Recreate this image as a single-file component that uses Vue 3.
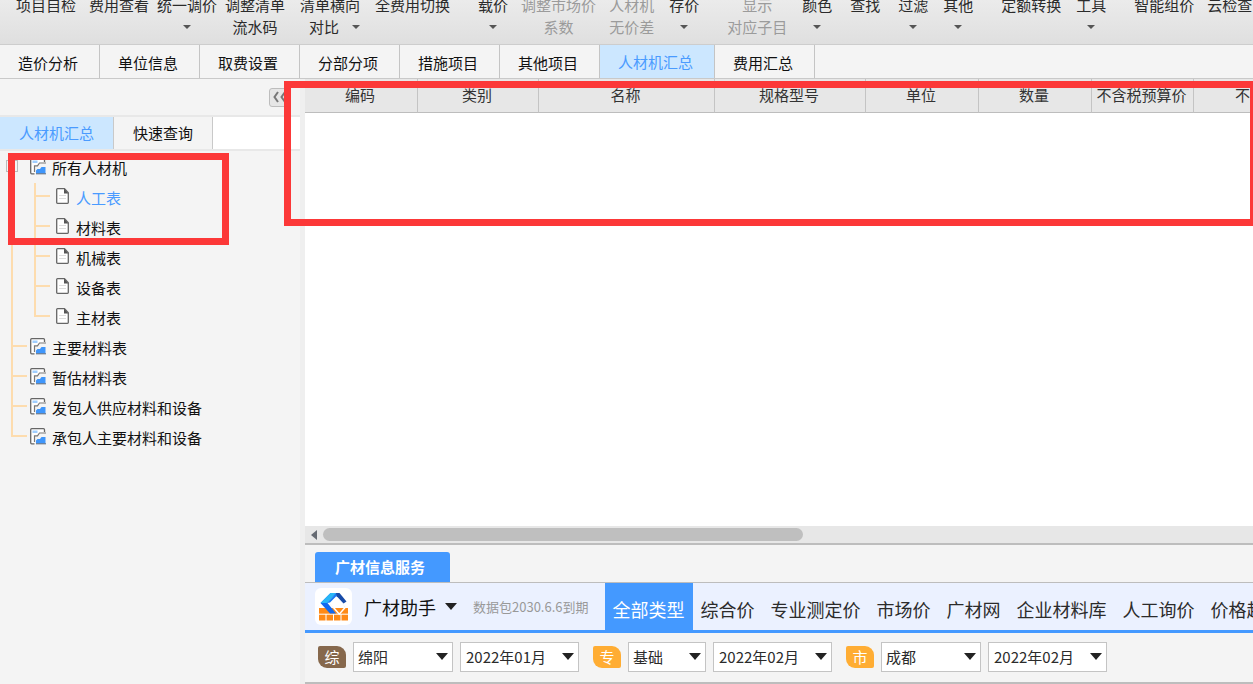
<script setup>
import { ref } from 'vue'

const tools = [
  { top: '项目自检', gap: 'none' },
  { top: '费用查看', gap: 'm' },
  { top: '统一调价', gap: 's', arrow: true },
  { top: '调整清单', bottom: '流水码', gap: 's' },
  { top: '清单横向', bottom: '对比', arrow: true, gap: 'l' },
  { top: '全费用切换', gap: 'l' },
  { top: '载价', gap: 'group', arrow: true },
  { top: '调整市场价', bottom: '系数', gap: 'm', disabled: true },
  { top: '人材机', bottom: '无价差', gap: 'm', disabled: true },
  { top: '存价', gap: 'l', arrow: true },
  { top: '显示', bottom: '对应子目', gap: 'group', disabled: true },
  { top: '颜色', gap: 'l', arrow: true },
  { top: '查找', gap: 'xl' },
  { top: '过滤', gap: 'xl', arrow: true },
  { top: '其他', gap: 'l', arrow: true },
  { top: '定额转换', gap: 'group' },
  { top: '工具', gap: 'l', arrow: true },
  { top: '智能组价', gap: 'group' },
  { top: '云检查', gap: 'm' }
]
const tabs = ['造价分析', '单位信息', '取费设置', '分部分项', '措施项目', '其他项目', '人材机汇总', '费用汇总']
const activeTab = ref('人材机汇总')
const sideTabs = ['人材机汇总', '快速查询']
const activeSide = ref('人材机汇总')
const tree = [
  { name: '所有人材机', children: ['人工表', '材料表', '机械表', '设备表', '主材表'] },
  { name: '主要材料表' },
  { name: '暂估材料表' },
  { name: '发包人供应材料和设备' },
  { name: '承包人主要材料和设备' }
]
const activeNode = ref('人工表')
const columns = ['编码', '类别', '名称', '规格型号', '单位', '数量', '不含税预算价', '不']
const kinds = ['全部类型', '综合价', '专业测定价', '市场价', '广材网', '企业材料库', '人工询价', '价格趋势']
const activeKind = ref('全部类型')
const filters = [
  { mark: '综', name: '综合价', tone: 'brown', area: '绵阳', month: '2022年01月', size: 'wide' },
  { mark: '专', name: '专业测定价', tone: 'orange', area: '基础', month: '2022年02月', size: 'narrow' },
  { mark: '市', name: '市场价', tone: 'orange', area: '成都', month: '2022年02月', size: 'wide' }
]
</script>

<template>
  <div class="app">
    <header class="toolbar">
      <button v-for="t in tools" :key="t.top" class="tool" :class="'gap-' + t.gap" :disabled="t.disabled">
        <span class="tool-line">{{ t.top }}</span>
        <span class="tool-line" :class="{ split: t.bottom && t.arrow }">
          <span v-if="t.bottom">{{ t.bottom }}</span>
          <i v-if="t.arrow" class="caret"></i>
        </span>
      </button>
    </header>

    <nav class="tabs">
      <button v-for="t in tabs" :key="t" class="tab" :class="{ active: t === activeTab }" @click="activeTab = t">{{ t }}</button>
    </nav>

    <div class="body">
      <aside class="side">
        <div class="side-head">
          <button class="collapse" aria-label="收起">
            <svg width="14" height="12" viewBox="0 0 14 12" fill="none" stroke="#777" stroke-width="2">
              <path d="M5 1 1.500 6 5 11M12 1 8.500 6l3.500 5" />
            </svg>
          </button>
        </div>
        <nav class="side-tabs">
          <button v-for="t in sideTabs" :key="t" class="side-tab" :class="{ active: t === activeSide }" @click="activeSide = t">{{ t }}</button>
        </nav>
        <ul class="tree">
          <li v-for="n in tree" :key="n.name" class="node" :class="{ parent: n.children }">
            <i v-if="n.children" class="expander"></i>
            <button class="row" @click="activeNode = n.name">
              <svg class="icon-sheet" width="17" height="17" viewBox="0 0 17 17" fill="none">
                <path d="M1 1h13.500v4L9 6 7.500 8H4.500v7.500H1z" fill="#fff" />
                <path d="M2.500 2.500h5v2.500h-5z" fill="#9fceff" />
                <path d="M6 15.500v-3l1.500-1.500h2.500l1.500-2H15.500v6.500z" fill="#3f96fb" />
                <path d="M14.500 4V1.700Q14.500.7 13.500.7H1.700Q.7.7.7 1.700v13.100q0 1 1 1H4.500" stroke="#666" stroke-width="1.300" />
                <path d="M4.500 14V7.800H7.500L9.500 5H16" stroke="#777" stroke-width="1.200" />
                <path d="M6 15.800h10" stroke="#56657a" stroke-width="1" />
              </svg>
              <span>{{ n.name }}</span>
            </button>
            <ul v-if="n.children" class="leaves">
              <li v-for="c in n.children" :key="c" class="leaf">
                <button class="row" :class="{ active: c === activeNode }" @click="activeNode = c">
                  <svg class="icon-doc" width="13" height="16" viewBox="0 0 13 16" fill="none">
                    <path d="M1.500.7H8.500l3.800 4v9.800q0 .8-.8.8h-10q-.8 0-.8-.8v-13q0-.8.8-.8z" fill="#fff" stroke="#666" stroke-width="1.300" />
                    <path d="M8 1v4.500h4.300L8.500 1z" fill="#555" />
                    <path d="M3 7.500h7M3 10.500h7" stroke="#ddd" />
                  </svg>
                  <span>{{ c }}</span>
                </button>
              </li>
            </ul>
          </li>
        </ul>
      </aside>

      <main class="main">
        <div class="sheet">
          <table class="grid">
            <colgroup>
              <col v-for="(c, i) in columns" :key="c" :class="'col-' + i" />
            </colgroup>
            <thead>
              <tr><th v-for="c in columns" :key="c">{{ c }}</th></tr>
            </thead>
          </table>
        </div>
        <div class="scroll">
          <svg width="6" height="10" viewBox="0 0 6 10"><path d="M6 0v10L0 5z" fill="#666b73" /></svg>
          <div class="thumb"></div>
        </div>

        <section class="service">
          <div class="service-tabs"><button class="service-tab">广材信息服务</button></div>
          <div class="service-bar">
            <span class="logo">
              <svg width="37" height="37" viewBox="0 0 37 37">
                <path d="M4 20h29v12.500H4z" fill="#ff8a16" />
                <path d="M4 26.200h29M11 26v7M26 26v7M18.500 26v7" stroke="#fff" stroke-width="1" fill="none" />
                <path d="M13 14.500 20.500 8 30 18.500 24 25.500z" fill="#ebf1ff" />
                <path d="M13.500 14.500 21 8l8 10v2H19z" fill="#fff" />
                <path d="M5.500 15 15.500 5H21L12.500 15l8.500 10.500h-6z" fill="#1169f0" />
                <path d="M5.500 15 15.500 5H21l-8.500 10z" fill="#29b6f6" />
                <path d="M12.500 15 21 5h2.500l2 3.500H21L15 14.500z" fill="#1878f2" />
                <path d="M21 5h3.500L31.500 13.500 28.500 15.500 22 8.500z" fill="#174ba8" />
                <path d="M18.500 20h12l-6 6z" fill="#ff8a16" />
                <path d="m18.500 19.500 5.800 6.700 5.800-6.700" stroke="#fff" stroke-width="1.500" fill="none" />
              </svg>
            </span>
            <button class="helper">广材助手<i class="caret big"></i></button>
            <span class="expiry">数据包2030.6.6到期</span>
            <nav class="kinds">
              <button v-for="k in kinds" :key="k" class="kind" :class="{ active: k === activeKind }" @click="activeKind = k">{{ k }}</button>
            </nav>
          </div>
          <div class="filters">
            <div v-for="f in filters" :key="f.mark" class="filter">
              <span class="mark" :class="f.tone">{{ f.mark }}</span>
              <label class="pick" :class="f.size">
                <select :aria-label="f.name + '地区'"><option>{{ f.area }}</option></select>
                <i class="caret big"></i>
              </label>
              <label class="pick month">
                <select :aria-label="f.name + '月份'"><option>{{ f.month }}</option></select>
                <i class="caret big"></i>
              </label>
            </div>
          </div>
        </section>
      </main>
      <div class="callout callout-grid"></div>
      <div class="callout callout-tree"></div>
    </div>
  </div>
</template>

<style>
body {
  margin: 0;
  background: #f4f4f4;
}
</style>

<style scoped>
.app {
  display: flex;
  flex-direction: column;
  min-height: 100vh;
  overflow: hidden;
  background: #f4f4f4;
  color: #111;
  font-family: "Noto Sans CJK SC", sans-serif;
  font-size: 15px;
  line-height: 22px;
}
button {
  flex: none;
  margin: 0;
  padding: 0;
  border: 0;
  background: none;
  color: inherit;
  font: inherit;
  white-space: nowrap;
}
ul {
  margin: 0;
  padding: 0;
  list-style: none;
}
.caret {
  flex: none;
  border: 4px solid transparent;
  border-top: 4px solid #555;
  border-bottom: 0;
}
.caret.big {
  border-width: 7px 6px 0;
  border-top-color: #222;
}

.toolbar {
  display: flex;
  align-items: flex-end;
  height: 44px;
  padding-left: 16px;
  overflow: hidden;
  border-bottom: 1px solid #cdcdcd;
  background: linear-gradient(#ebebeb, #dfdfdf);
  color: #2b2b2b;
}
.tool {
  display: flex;
  flex-direction: column;
  align-items: center;
  margin-bottom: 6px;
}
.tool:disabled {
  color: #9b9b9b;
}
.tool-line {
  display: flex;
  align-items: center;
  justify-content: center;
  height: 22px;
}
.tool-line.split {
  align-self: flex-end;
  gap: 13px;
}
.gap-s { margin-left: 8px; }
.gap-m { margin-left: 13px; }
.gap-l { margin-left: 15px; }
.gap-xl { margin-left: 18px; }
.gap-group { margin-left: 28px; }

.tabs {
  display: flex;
  height: 33px;
  border-bottom: 1px solid #c9c9c9;
}
.tab {
  padding: 3px 21px 0 18px;
  border-right: 1px solid #c4c4c4;
}
.tab.active,
.side-tab.active {
  background: #cce7ff;
  color: #4a9bff;
}
.tab.active {
  padding-top: 1px;
}

.body {
  position: relative;
  display: flex;
  flex: 1;
}
.side {
  flex: none;
  width: 300px;
  border-right: 5px solid #efefef;
}
.side-head {
  display: flex;
  align-items: center;
  justify-content: flex-end;
  height: 36px;
  padding-right: 9px;
  border-bottom: 2px solid #e8e8e8;
}
.collapse {
  display: flex;
  align-items: center;
  justify-content: center;
  width: 22px;
  height: 19px;
  border: 1px solid #bdbdbd;
  border-radius: 3px;
  background: #e6e6e6;
}
.side-tabs {
  display: flex;
  height: 32px;
  border-bottom: 2px solid #e8e8e8;
  background: #fff;
}
.side-tab {
  padding: 0 19px;
  border-right: 1px solid #c9c9c9;
  background: #f4f4f4;
}

.tree {
  padding-top: 2px;
}
.node {
  position: relative;
  padding-left: 30px;
}
.row {
  display: flex;
  align-items: center;
  height: 30px;
}
.row.active {
  color: #4a9bff;
}
.row svg {
  margin-bottom: 4px;
}
.icon-sheet {
  margin-right: 5px;
}
.icon-doc {
  margin-right: 7px;
}
.leaf {
  position: relative;
  padding-left: 26px;
}
.node::before,
.leaf::before {
  content: "";
  position: absolute;
  top: 0;
  bottom: 0;
  left: 11px;
  border-left: 2px solid #fddcae;
}
.leaf::before {
  left: 4px;
}
.node:last-child::before,
.leaf:last-child::before {
  bottom: auto;
  height: 14px;
}
.parent::before {
  top: 18px;
}
.node:not(.parent)::after,
.leaf::after {
  content: "";
  position: absolute;
  top: 12px;
  left: 11px;
  width: 16px;
  border-top: 2px solid #fddcae;
}
.leaf::after {
  left: 4px;
}
.expander {
  position: absolute;
  top: 7px;
  left: 6px;
  width: 10px;
  height: 10px;
  border: 1px solid #bbb;
  background: #f4f4f4;
}

.main {
  display: flex;
  flex: 1;
  flex-direction: column;
  min-width: 0;
}
.sheet {
  flex: 1;
  overflow: hidden;
  background: #fff;
}
.grid {
  width: 100%;
  table-layout: fixed;
  border-collapse: separate;
  border-spacing: 0;
}
.grid th {
  box-sizing: border-box;
  height: 34px;
  padding: 0 2px 2px 0;
  border-right: 1px solid #c4c4c4;
  border-bottom: 1px solid #bdbdbd;
  background: #e7e7e7;
  color: #333;
  font-weight: 400;
  white-space: nowrap;
}
.grid th:last-child {
  padding-left: 41px;
  border-right: 0;
  text-align: left;
}
.col-0, .col-4, .col-5 { width: 113px; }
.col-1 { width: 121px; }
.col-2 { width: 176px; }
.col-3 { width: 151px; }
.col-6 { width: 102px; }

.scroll {
  display: flex;
  align-items: center;
  gap: 6px;
  height: 17px;
  padding-left: 6px;
  border-bottom: 2px solid #bdbdbd;
  background: #e7e7e7;
}
.thumb {
  width: 51%;
  height: 13px;
  border-radius: 7px;
  background: #bfbfbf;
}

.service-tabs {
  display: flex;
  padding: 7px 10px 0;
  border-bottom: 1px solid #bdbdbd;
}
.service-tab {
  height: 30px;
  padding: 0 25px 0 20px;
  border-radius: 3px 3px 0 0;
  background: #4499ff;
  color: #fff;
  font-weight: 700;
}
.service-bar {
  display: flex;
  align-items: center;
  height: 47px;
  overflow: hidden;
  border-bottom: 3px solid #4499ff;
  background: #ebf1ff;
  font-size: 18px;
}
.logo {
  display: flex;
  flex: none;
  margin: 0 12px 0 10px;
  border-radius: 6px;
  background: #fff;
}
.helper {
  display: flex;
  align-items: center;
  gap: 9px;
}
.expiry {
  flex: none;
  margin: 0 16px;
  color: #999;
  font-size: 13px;
}
.kinds {
  display: flex;
  align-self: stretch;
  color: #2b2b2b;
}
.kind {
  padding: 4px 8px 0;
}
.kind.active {
  background: #4499ff;
  color: #fff;
}

.filters {
  display: flex;
  gap: 14px;
  padding: 9px 12px 10px 13px;
  border-bottom: 2px solid #bdbdbd;
}
.filter {
  display: flex;
  align-items: center;
  gap: 7px;
}
.mark {
  width: 28px;
  height: 22px;
  border-radius: 2px 9px 2px 9px;
  color: #fff;
  text-align: center;
}
.brown { background: #86684c; }
.orange { background: #ffad33; }
.pick {
  position: relative;
  width: 100px;
}
.pick.narrow { width: 78px; }
.pick.month { width: 119px; }
.pick select {
  appearance: none;
  display: block;
  box-sizing: border-box;
  width: 100%;
  height: 30px;
  margin: 0;
  padding: 0 4px;
  border: 1px solid #c4c4c4;
  border-radius: 0;
  background: #fff;
  color: #2b2b2b;
  font: inherit;
}
.pick.month select {
  padding-left: 5px;
}
.pick .caret {
  position: absolute;
  top: 11px;
  right: 5px;
  pointer-events: none;
}

.callout {
  position: absolute;
  border: 7px solid #fc3838;
  pointer-events: none;
}
.callout-grid {
  top: 2px;
  right: -4px;
  left: 284px;
  height: 131px;
}
.callout-tree {
  top: 74px;
  left: 8px;
  width: 207px;
  height: 78px;
}
</style>
